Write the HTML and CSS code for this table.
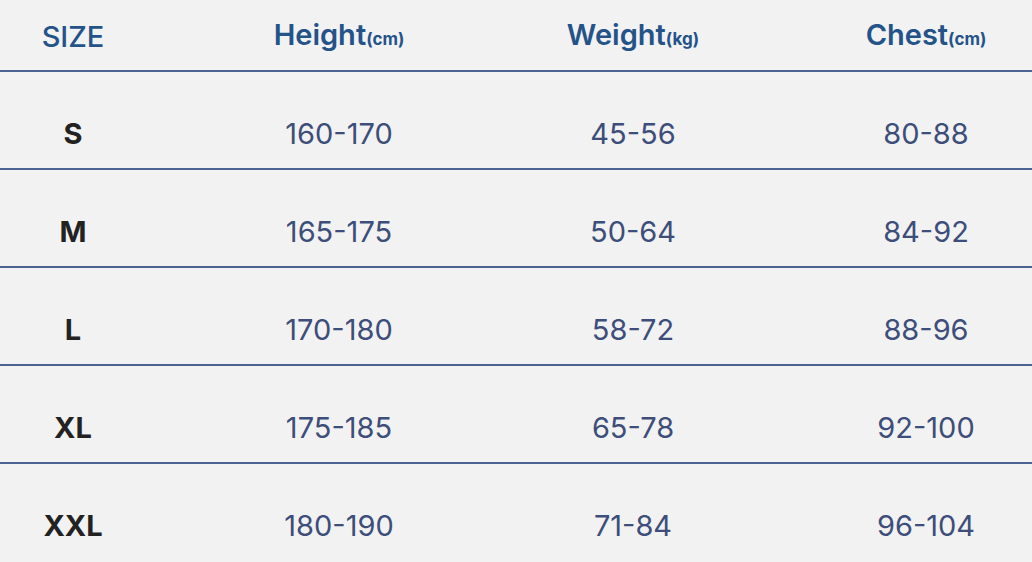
FILE: index.html
```html
<!DOCTYPE html>
<html>
<head>
<meta charset="utf-8">
<link rel="stylesheet" href="styles.css">
</head>
<body>
<div class="chart">
  <div class="row head">
    <div class="cell c1 size-h">SIZE</div>
    <div class="cell c2">Height<span class="unit">(cm)</span></div>
    <div class="cell c3">Weight<span class="unit">(kg)</span></div>
    <div class="cell c4">Chest<span class="unit">(cm)</span></div>
  </div>
  <div class="row body">
    <div class="cell c1 sz">S</div>
    <div class="cell c2">160-170</div>
    <div class="cell c3">45-56</div>
    <div class="cell c4">80-88</div>
  </div>
  <div class="row body">
    <div class="cell c1 sz">M</div>
    <div class="cell c2">165-175</div>
    <div class="cell c3">50-64</div>
    <div class="cell c4">84-92</div>
  </div>
  <div class="row body">
    <div class="cell c1 sz">L</div>
    <div class="cell c2">170-180</div>
    <div class="cell c3">58-72</div>
    <div class="cell c4">88-96</div>
  </div>
  <div class="row body">
    <div class="cell c1 sz">XL</div>
    <div class="cell c2">175-185</div>
    <div class="cell c3">65-78</div>
    <div class="cell c4">92-100</div>
  </div>
  <div class="row body last">
    <div class="cell c1 sz">XXL</div>
    <div class="cell c2">180-190</div>
    <div class="cell c3">71-84</div>
    <div class="cell c4">96-104</div>
  </div>
</div>
</body>
</html>
```
FILE: styles.css
```css
html, body {
  margin: 0;
  padding: 0;
  background: #f2f2f2;
  overflow: hidden;
}
.chart {
  width: 1032px;
  font-family: Inter, "Noto Sans", sans-serif;
}
.row {
  display: grid;
  grid-template-columns: 146px 386px 202px 298px;
  border-bottom: 2px solid #4a6390;
}
.cell {
  text-align: center;
  line-height: 36px;
}
.c4 {
  padding-left: 86px;
}
.head {
  height: 70px;
  align-items: center;
}
.head .cell {
  padding-top: 4px;
  font-size: 29px;
  font-weight: 600;
  color: #245389;
}
.head .size-h {
  font-weight: 500;
}
.unit {
  font-size: 17px;
  font-weight: 700;
}
.body {
  height: 96px;
  box-sizing: content-box;
}
.body .cell {
  padding-top: 44px;
  font-size: 29px;
  color: #3d4e7a;
}
.body .sz {
  font-weight: 700;
  color: #222222;
}
.last {
  border-bottom: none;
}
```
